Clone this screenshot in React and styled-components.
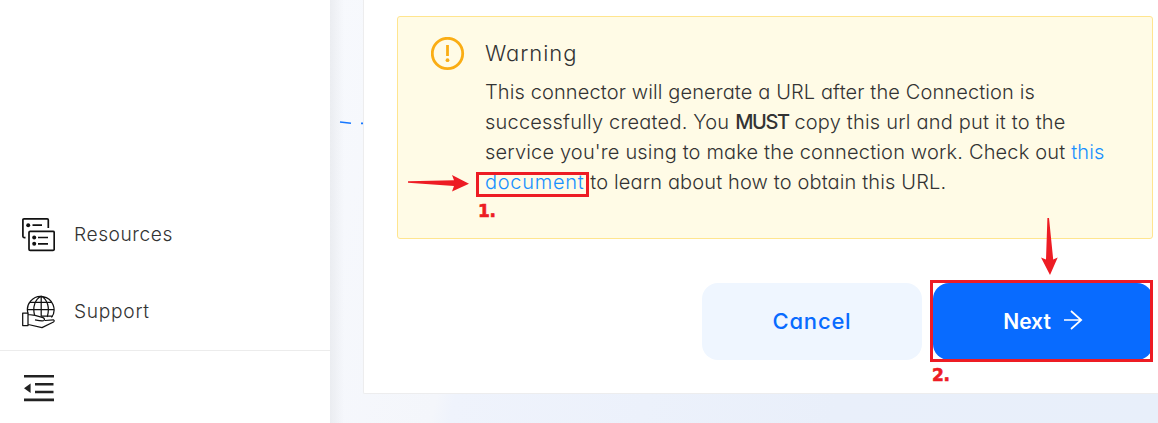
import React from "react";
import styled, { createGlobalStyle, css } from "styled-components";

const Global = createGlobalStyle`
  * { box-sizing: border-box; }
  body { margin: 0; background: #fff; overflow: hidden; }
`;

const Page = styled.div`
  position: relative;
  display: flex;
  width: 1158px;
  height: 423px;
  overflow: hidden;
  font-family: Inter, "Open Sans", sans-serif;
  font-feature-settings: "cv11";
  color: #333;
`;

const Sidebar = styled.nav`
  display: flex;
  flex-direction: column;
  flex: 0 0 330px;
  padding-top: 196px;
  background: #fff;
`;

const NavItem = styled.a`
  display: flex;
  align-items: center;
  gap: 19px;
  height: 77px;
  padding-left: 22px;
  font-size: 19.2px;
  font-weight: 300;
`;

const NavIcon = styled.svg`
  flex: none;
  width: 33px;
  height: 34px;
  fill: none;
  stroke: #111;
`;

const Label = styled.span`
  padding-bottom: 1px;
  letter-spacing: ${(p) => p.$track || 0}px;
`;

const Footer = styled.div`
  display: flex;
  align-items: center;
  flex: 1;
  padding: 3px 0 0 24px;
  border-top: 1px solid #ececec;
`;

const Content = styled.main`
  display: flex;
  flex: 1;
  align-items: flex-start;
  min-width: 0;
  background:
    linear-gradient(90deg, rgba(225, 227, 231, 0.55), rgba(240, 242, 246, 0) 14px),
    linear-gradient(104deg, #f7f9fd 0%, #f4f6fb 22%, #eff3fc 24%, #e9effa 65%, #e8effa 100%);
`;

const Gutter = styled.div`
  display: flex;
  flex: 0 0 33px;
  padding: 120px 0 0 9px;
`;

const Card = styled.section`
  flex: 1;
  height: 394px;
  padding: 16px 5px 0 33px;
  background: #fff;
  border: solid #ededee;
  border-width: 0 0 1px 1px;
  border-bottom-left-radius: 2px;
`;

const Alert = styled.div`
  display: flex;
  height: 223px;
  gap: 20px;
  padding: 20px 0 0 33px;
  background: #fffbe6;
  border: 1px solid #ffe58f;
  border-radius: 3px;
`;

const AlertBody = styled.div`
  flex: 1;
`;

const AlertTitle = styled.h2`
  margin: 0 0 7px;
  height: 33px;
  font-size: 22px;
  font-weight: 300;
  line-height: 33px;
`;

const Line = styled.div`
  width: max-content;
  height: 30px;
  font-size: 20px;
  font-weight: 300;
  line-height: 30px;
  white-space: pre;
  letter-spacing: ${(p) => p.$track || 0}px;
`;

const Strong = styled.b`
  font-weight: 500;
  letter-spacing: -1.4px;
`;

const DocLink = styled.a`
  color: #1890ff;
  letter-spacing: ${(p) => (p.$track ? p.$track + "px" : "inherit")};
`;

const Actions = styled.div`
  display: flex;
  justify-content: flex-end;
  gap: 11px;
  margin-top: 44px;
`;

const Button = styled.button`
  display: flex;
  align-items: center;
  justify-content: center;
  gap: 12px;
  width: 220px;
  height: 77px;
  padding: 0;
  border: 0;
  border-radius: 16px;
  font: 500 22px Inter, "Open Sans", sans-serif;
  font-feature-settings: "cv11";
  ${(p) =>
    p.$primary
      ? css`background: #086bff; color: #fff; font-size: 21px; font-weight: 600;`
      : css`background: #eff6ff; color: #086bff;`}
`;

const NextArrow = styled.svg`
  margin-bottom: 3px;
`;

const Highlight = styled.div`
  position: absolute;
  left: ${(p) => p.$x}px;
  top: ${(p) => p.$y}px;
  width: ${(p) => p.$w}px;
  height: ${(p) => p.$h}px;
  border: 3px solid #ed1c24;
`;

const StepLabel = styled.span`
  position: absolute;
  left: ${(p) => p.$x}px;
  top: ${(p) => p.$y}px;
  color: #ed1c24;
  font: bold 17px/20px "DejaVu Sans", sans-serif;
  letter-spacing: -0.4px;
  -webkit-text-stroke: 0.6px #ed1c24;
`;

const Pointer = styled.svg`
  position: absolute;
  left: ${(p) => p.$x}px;
  top: ${(p) => p.$y}px;
  fill: #ed1c24;
`;

export default function App() {
  return (
    <Page>
      <Global />
      <Sidebar>
        <NavItem>
          <NavIcon viewBox="0 0 33 34" strokeWidth="1.7">
            <path d="M3.5 19.7H2.5Q.9 19.7.9 18V1.9Q.9.9 2 .9H25.2Q26.3.9 26.3 2V10" />
            <rect x="7" y="13.4" width="25.2" height="19" rx="1.2" />
            <path d="M10.5 7.2H20M16 19.5H26M16 25.8H26" />
            <g fill="#111" stroke="none">
              <circle cx="6.2" cy="7.2" r="2" />
              <circle cx="12.2" cy="19.5" r="2" />
              <circle cx="12.2" cy="25.8" r="2" />
            </g>
          </NavIcon>
          <Label $track={0.55}>Resources</Label>
        </NavItem>
        <NavItem>
          <NavIcon viewBox="0 0 33 34" strokeWidth="1.25" strokeLinejoin="round">
            <path d="M6 18.5A13.3 13.3 0 1 1 29.5 22.5M19.2 1V21.5M5.8 14.5H32.4M8.5 7.3H30M19 21H31M12.5 20C10.5 12 13 4 19.2 1.2C25.5 4 28 13 25.2 22" />
            <path d="M.7 18H6V30.5H.7ZM6.3 19.5L13 20.3L21 22.6Q23.3 23.8 22 25.5Q20.5 26.3 13 24.8M23 25.5L31.3 24.8Q33 25.8 31.5 27L20 32.6L6.3 29.5" />
          </NavIcon>
          <Label $track={0.7}>Support</Label>
        </NavItem>
        <Footer>
          <svg width="30" height="28" viewBox="0 0 30 28" fill="#222">
            <path d="M0 0H30V2.6H0ZM11 8H29.5V10.5H11ZM11 15.7H29.5V18.2H11ZM0 23.6H30V26.2H0ZM0 13.2L6.6 8.4V18Z" />
          </svg>
        </Footer>
      </Sidebar>
      <Content>
        <Gutter>
          <svg width="24" height="6" viewBox="0 0 24 6" fill="none" stroke="#1677ff" strokeWidth="1.6">
            <path d="M1 2L12 3.3M22 3.4H24" />
          </svg>
        </Gutter>
        <Card>
          <Alert>
            <svg width="34" height="34" viewBox="0 0 34 34" fill="none" stroke="#faad14" strokeWidth="2.8">
              <circle cx="16.5" cy="16.5" r="15.2" />
              <path d="M16.5 8V19" />
              <circle cx="16.5" cy="23.2" r="1.9" fill="#faad14" stroke="none" />
            </svg>
            <AlertBody>
              <AlertTitle>
                <Label $track={0.95}>Warning</Label>
              </AlertTitle>
              <Line $track={0.12}>This connector will generate a URL after the Connection is</Line>
              <Line $track={0.2}>
                successfully created. You <Strong>MUST</Strong> copy this url and put it to the
              </Line>
              <Line $track={0.17}>
                service you're using to make the connection work. Check out <DocLink>this</DocLink>
              </Line>
              <Line $track={0.14}>
                <DocLink $track={0.73}>document</DocLink> to learn about how to obtain this URL.
              </Line>
            </AlertBody>
          </Alert>
          <Actions>
            <Button>
              <Label $track={0.8}>Cancel</Label>
            </Button>
            <Button $primary>
              <Label>Next</Label>
              <NextArrow width="20" height="20" viewBox="0 0 20 20" fill="none" stroke="#fff" strokeWidth="1.7">
                <path d="M1 10H18.5M8 1L18.2 10L8 19" />
              </NextArrow>
            </Button>
          </Actions>
        </Card>
      </Content>
      <Highlight $x={476} $y={172} $w={113} $h={25} />
      <Highlight $x={930} $y={280} $w={223} $h={82} />
      <Pointer $x={408} $y={175} width="61" height="17" viewBox="0 0 61 17">
        <path d="M0 6.2L46 5.2L44 0L61 8.8L44 16.4L46 11L0 7.7Z" />
      </Pointer>
      <Pointer $x={1041} $y={218} width="17" height="57" viewBox="0 0 17 57">
        <path d="M6.4 0H8L12.2 41.5L16.7 39.5L9 57L0 39.5L5 41.5Z" />
      </Pointer>
      <StepLabel $x={478} $y={201}>1.</StepLabel>
      <StepLabel $x={932} $y={365}>2.</StepLabel>
    </Page>
  );
}
